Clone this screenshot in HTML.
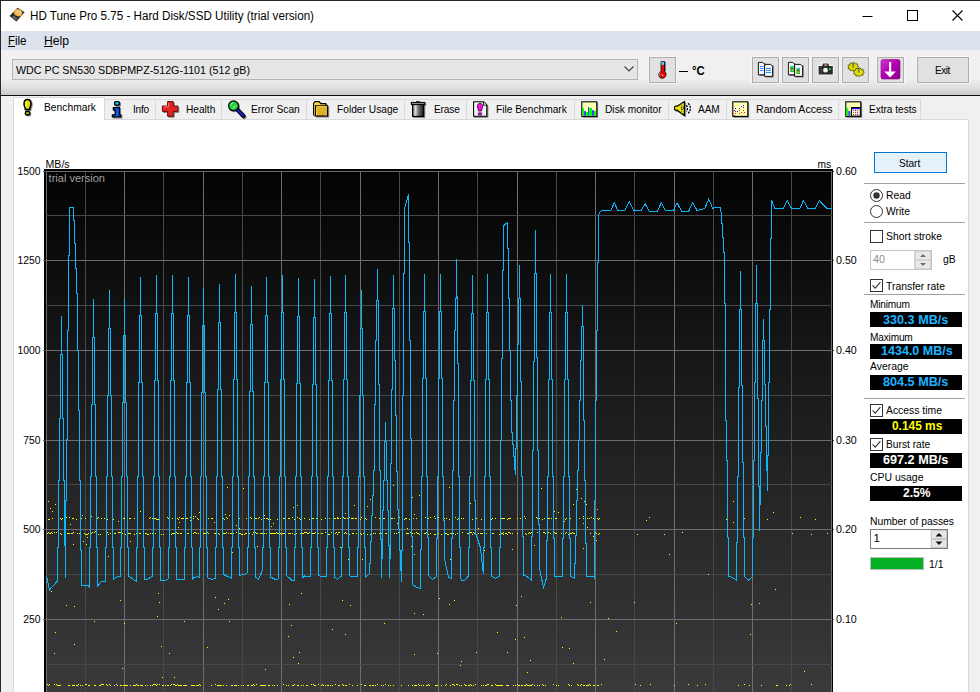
<!DOCTYPE html>
<html lang="en"><head><meta charset="utf-8"><title>HD Tune Pro 5.75 - Hard Disk/SSD Utility (trial version)</title>
<style>
html,body{margin:0;padding:0;}
body{width:980px;height:692px;overflow:hidden;background:#f0f0f0;font-family:"Liberation Sans",sans-serif;color:#000;position:relative;}
.t{position:absolute;white-space:pre;display:block;margin:0;padding:0;}
.abs{position:absolute;}
svg{position:absolute;overflow:visible;}
.tab{position:absolute;top:99px;height:20px;background:#f0f0f0;border:1px solid #d9d9d9;border-bottom:none;box-sizing:border-box;}
.tab.active{top:97px;height:23px;background:#fff;}
.tbtn{position:absolute;top:57px;height:26px;box-sizing:border-box;border:1px solid #adadad;background:#e1e1e1;box-shadow:0 0 0 1px #f6f6f6;}
.sep{position:absolute;left:864px;width:101px;height:1px;background:#a0a0a0;}
.val{position:absolute;left:870px;width:92px;height:15px;background:#000;}
.chk{position:absolute;left:870px;width:13px;height:13px;box-sizing:border-box;border:1px solid #333;background:#fff;}
</style></head><body>
<div style="position:absolute;left:0px;top:0px;width:980px;height:31px;background:#fff;"></div><div style="position:absolute;left:0px;top:0px;width:980px;height:1px;background:#2a2a2a;"></div><div style="position:absolute;left:0px;top:0px;width:1px;height:692px;background:#2a2a2a;z-index:50;"></div><svg style="left:8px;top:6px" width="20" height="18" viewBox="8 6 20 18"><path d="M17.5 8L24.3 12.3L16.4 21.2L9.8 15.9Z" fill="#262626" stroke="#3a3a3a" stroke-width="0.6"/><path d="M13.2 15.6L17.6 18.2L16 20L12 17.2Z" fill="#777" opacity="0.8"/><ellipse cx="18.1" cy="12.7" rx="4.3" ry="3.5" transform="rotate(20 18.1 12.7)" fill="#f0b040"/><ellipse cx="18.3" cy="12.3" rx="2.6" ry="2" transform="rotate(20 18.1 12.7)" fill="#f7cf78"/><circle cx="18.1" cy="12.6" r="1.1" fill="#b9b9c4"/></svg><span class="t" id="title" style="left:30px;top:8.42px;font-size:12.5px;line-height:16.5px;letter-spacing:0.000px;transform:scaleX(0.9313);transform-origin:0 0;">HD Tune Pro 5.75 - Hard Disk/SSD Utility (trial version)</span><svg style="left:850px;top:1px" width="130" height="30" viewBox="0 0 130 30"><path d="M12.5 15.5H22.5" stroke="#000" stroke-width="1" fill="none"/><rect x="57.5" y="9.5" width="10" height="10" fill="none" stroke="#000" stroke-width="1"/><path d="M102.5 9.5L112.5 19.5M112.5 9.5L102.5 19.5" stroke="#000" stroke-width="1.1" fill="none"/></svg><div style="position:absolute;left:1px;top:31px;width:979px;height:19px;background:#dce3ed;"></div><span class="t" id="m1" style="left:8px;top:33.04px;font-size:12px;line-height:16px;letter-spacing:0.000px;transform:scaleX(0.9556);transform-origin:0 0;"><u>F</u>ile</span><span class="t" id="m2" style="left:44px;top:33.04px;font-size:12px;line-height:16px;letter-spacing:0.000px;transform:scaleX(1.0127);transform-origin:0 0;"><u>H</u>elp</span><div style="position:absolute;left:1px;top:50px;width:979px;height:45px;background:linear-gradient(#f1f1f1 0,#f0f0f0 28px,#e2e2e2 37px,#c8c8c8 45px);"></div><div style="position:absolute;left:1px;top:95px;width:979px;height:1px;background:#101010;"></div><div style="position:absolute;left:12px;top:59px;width:626px;height:21px;box-sizing:border-box;border:1px solid #b4b4b4;background:#e6e6e6;"></div><span class="t" id="combo" style="left:16px;top:62.67px;font-size:11.5px;line-height:15.5px;letter-spacing:0.000px;transform:scaleX(0.9300);transform-origin:0 0;">WDC PC SN530 SDBPMPZ-512G-1101 (512 gB)</span><svg style="left:623px;top:65px" width="12" height="8" viewBox="0 0 12 8"><path d="M1.5 1.5L6 6L10.5 1.5" fill="none" stroke="#404040" stroke-width="1.1"/></svg><div class="tbtn" style="left:649px;width:27px"></div><div style="position:absolute;left:679px;top:71px;width:9px;height:1px;background:#000;"></div><span class="t" id="degc" style="left:691.5px;top:63.02px;font-size:12.5px;line-height:16.5px;letter-spacing:0.000px;transform:scaleX(0.9051);transform-origin:0 0;font-weight:bold;">°C</span><div class="tbtn" style="left:752px;width:27px"></div><div class="tbtn" style="left:782px;width:27px"></div><div class="tbtn" style="left:812px;width:27px"></div><div class="tbtn" style="left:842px;width:27px"></div><div class="tbtn" style="left:877px;width:27px"></div><div class="tbtn" style="left:917px;width:52px"></div><span class="t" id="exit" style="left:934.6px;top:62.57px;font-size:11.5px;line-height:15.5px;letter-spacing:-0.595px;transform:scaleX(0.8800);transform-origin:0 0;">Exit</span><svg style="left:640px;top:52px" width="340" height="36" viewBox="640 52 340 36"><path d="M661 61.6H664.6V71.6C666.6 72.4 666.8 76.8 663.8 78C660.4 79 657.8 76.4 659 73.4C659.4 72.4 660.2 72 661 71.6Z" fill="#f00000" stroke="#1a1a1a" stroke-width="0.9"/><rect x="661.3" y="61.9" width="2.9" height="3" fill="#30d8f0"/><path d="M660 72.6C659 73.6 659 75 659.6 76" stroke="#60e0f0" stroke-width="1" fill="none"/><path d="M661.8 74.2C661.8 75.2 662.6 75.8 663.4 75.8" stroke="#fff" stroke-width="0.9" fill="none"/><path d="M664.9 62V71.4" stroke="#000" stroke-width="1"/><path d="M759.4 63.4h6.4v12.4h-6.4z" fill="#000" opacity="0.55"/><path d="M758.4 62.4h4.4l2 2v10.4h-6.4z" fill="#f4f4f4" stroke="#000" stroke-width="0.9"/><rect x="760" y="66" width="3.4" height="1" fill="#1e90ff"/><rect x="760" y="68" width="3.4" height="1" fill="#1e90ff"/><rect x="760" y="70" width="3.4" height="1" fill="#1e90ff"/><path d="M765.6 65.4h8v12h-8z" fill="#000" opacity="0.55"/><path d="M764.6 64.4h6l2 2v10h-8z" fill="#f4f4f4" stroke="#000" stroke-width="0.9"/><rect x="766" y="68" width="5" height="1" fill="#1e90ff"/><rect x="766" y="70" width="5" height="1" fill="#1e90ff"/><rect x="766" y="72" width="5" height="1" fill="#1e90ff"/><path d="M789.4 63.4h6.4v12.4h-6.4z" fill="#000" opacity="0.55"/><path d="M788.4 62.4h4.4l2 2v10.4h-6.4z" fill="#f4f4f4" stroke="#000" stroke-width="0.9"/><rect x="790.2" y="66.6" width="3.6" height="5.4" fill="#20c030"/><rect x="790.2" y="65.8" width="3.6" height="1" fill="#30c8f0"/><rect x="791.4000000000001" y="67.8" width="1.4" height="1.6" fill="#e02020"/><rect x="791.6" y="69.6" width="1.4" height="1.4" fill="#e0c020"/><path d="M795.6 65.4h8v12h-8z" fill="#000" opacity="0.55"/><path d="M794.6 64.4h6l2 2v10h-8z" fill="#f4f4f4" stroke="#000" stroke-width="0.9"/><rect x="796.4" y="68.6" width="3.6" height="5.4" fill="#20c030"/><rect x="796.4" y="67.8" width="3.6" height="1" fill="#30c8f0"/><rect x="797.6" y="69.8" width="1.4" height="1.6" fill="#e02020"/><rect x="797.8" y="71.6" width="1.4" height="1.4" fill="#e0c020"/><path d="M818.6 66H822L823.2 63.4H828.2L829.4 66H832.8V74.4H818.6Z" fill="#2b2b2b" stroke="#fff" stroke-width="1.6" stroke-linejoin="round"/><path d="M818.6 66H822L823.2 63.4H828.2L829.4 66H832.8V74.4H818.6Z" fill="#2b2b2b"/><path d="M823.8 65.4C824.4 64.2 827 64.2 827.6 65.4Z" fill="#eee"/><rect x="820.6" y="66" width="0.8" height="8.4" fill="#555"/><circle cx="825.5" cy="70.2" r="2.4" fill="#f2f2f2"/><rect x="829.2" y="68.2" width="1.8" height="1.8" fill="#10e030"/><path d="M858.8 66.8L857.3 68.0L857.5 69.7L855.4 69.8L854.2 71.2L852.4 70.2L850.4 70.7L849.9 69.0L847.9 68.3L848.8 66.8L847.9 65.3L849.9 64.6L850.4 62.9L852.4 63.4L854.2 62.4L855.4 63.8L857.5 63.9L857.3 65.6Z" fill="#dede00" stroke="#5a5a00" stroke-width="0.9"/><rect x="852.5" y="63.199999999999996" width="1.4" height="4" fill="#9a9a9a" stroke="#555" stroke-width="0.4"/><path d="M864.4 72.2L862.9 73.4L863.1 75.1L861.0 75.2L859.8 76.6L858.0 75.6L856.0 76.1L855.5 74.4L853.5 73.7L854.4 72.2L853.5 70.7L855.5 70.0L856.0 68.3L858.0 68.8L859.8 67.8L861.0 69.2L863.1 69.3L862.9 71.0Z" fill="#dede00" stroke="#5a5a00" stroke-width="0.9"/><rect x="858.0999999999999" y="68.60000000000001" width="1.4" height="4" fill="#9a9a9a" stroke="#555" stroke-width="0.4"/><defs><linearGradient id="pu" x1="0" y1="0" x2="1" y2="1"><stop offset="0" stop-color="#d23cd2"/><stop offset="0.45" stop-color="#b400b4"/><stop offset="1" stop-color="#8c008c"/></linearGradient></defs><rect x="881" y="59.6" width="19" height="19.4" rx="1.8" fill="url(#pu)" stroke="#7a007a" stroke-width="0.6"/><path d="M889 62H891.2V71.4H895.8L890.1 77.4L884.2 71.4H889Z" fill="#fff"/></svg><div style="position:absolute;left:13px;top:119px;width:956px;height:580px;box-sizing:border-box;border:1px solid #d9d9d9;background:#fff;"></div><div class="tab active" style="left:13px;width:92px"></div><span class="t" id="tab0" style="left:43.5px;top:100.47px;font-size:11.5px;line-height:15.5px;letter-spacing:0.000px;transform:scaleX(0.8939);transform-origin:0 0;">Benchmark</span><div class="tab" style="left:104px;width:52px"></div><span class="t" id="tab1" style="left:132.5px;top:102.47px;font-size:11.5px;line-height:15.5px;letter-spacing:-0.259px;transform:scaleX(0.8800);transform-origin:0 0;">Info</span><div class="tab" style="left:155px;width:67px"></div><span class="t" id="tab2" style="left:185.5px;top:102.47px;font-size:11.5px;line-height:15.5px;letter-spacing:0.000px;transform:scaleX(0.8812);transform-origin:0 0;">Health</span><div class="tab" style="left:221px;width:86px"></div><span class="t" id="tab3" style="left:251.0px;top:102.47px;font-size:11.5px;line-height:15.5px;letter-spacing:0.000px;transform:scaleX(0.8878);transform-origin:0 0;">Error Scan</span><div class="tab" style="left:306px;width:99px"></div><span class="t" id="tab4" style="left:336.5px;top:102.47px;font-size:11.5px;line-height:15.5px;letter-spacing:0.000px;transform:scaleX(0.8878);transform-origin:0 0;">Folder Usage</span><div class="tab" style="left:404px;width:63px"></div><span class="t" id="tab5" style="left:434.0px;top:102.47px;font-size:11.5px;line-height:15.5px;letter-spacing:-0.182px;transform:scaleX(0.8800);transform-origin:0 0;">Erase</span><div class="tab" style="left:466px;width:109px"></div><span class="t" id="tab6" style="left:496.0px;top:102.47px;font-size:11.5px;line-height:15.5px;letter-spacing:0.000px;transform:scaleX(0.8862);transform-origin:0 0;">File Benchmark</span><div class="tab" style="left:574px;width:95px"></div><span class="t" id="tab7" style="left:604.5px;top:102.47px;font-size:11.5px;line-height:15.5px;letter-spacing:0.000px;transform:scaleX(0.8872);transform-origin:0 0;">Disk monitor</span><div class="tab" style="left:668px;width:59px"></div><span class="t" id="tab8" style="left:697.5px;top:102.47px;font-size:11.5px;line-height:15.5px;letter-spacing:-0.131px;transform:scaleX(0.8800);transform-origin:0 0;">AAM</span><div class="tab" style="left:726px;width:113px"></div><span class="t" id="tab9" style="left:755.5px;top:102.47px;font-size:11.5px;line-height:15.5px;letter-spacing:0.000px;transform:scaleX(0.9205);transform-origin:0 0;">Random Access</span><div class="tab" style="left:838px;width:83px"></div><span class="t" id="tab10" style="left:868.5px;top:102.47px;font-size:11.5px;line-height:15.5px;letter-spacing:-0.035px;transform:scaleX(0.8800);transform-origin:0 0;">Extra tests</span><svg style="left:0px;top:96px" width="980" height="26" viewBox="0 96 980 26"><g transform="translate(1 1)" opacity="0.45"><path d="M27.5 99.6C30.6 99.6 31 102 31 104C31 106.2 29.6 107.4 29.6 109.4L25.4 109.4C25.4 107.4 24 106.2 24 104C24 102 24.4 99.6 27.5 99.6Z" fill="#000" stroke="#000" stroke-width="1.5"/><rect x="25.4" y="111.5" width="4.2" height="3.2" rx="1.2" fill="#000" stroke="#000" stroke-width="1.5"/></g><path d="M27.5 99.6C30.6 99.6 31 102 31 104C31 106.2 29.6 107.4 29.6 109.4L25.4 109.4C25.4 107.4 24 106.2 24 104C24 102 24.4 99.6 27.5 99.6Z" fill="#dcdc00" stroke="#000" stroke-width="1.5"/><rect x="25.4" y="111.5" width="4.2" height="3.2" rx="1.2" fill="#dcdc00" stroke="#000" stroke-width="1.5"/><path d="M26.3 101.3v6.2" stroke="#f4f470" stroke-width="1.2"/><g transform="translate(1 1)" opacity="0.45"><rect x="114.6" y="101.6" width="4.8" height="3.6" rx="1" fill="#000" stroke="#000" stroke-width="1.3"/><path d="M113.4 107.6H119.4V114.8H120.8V116.8H112.4V114.8H115.2V109.8H113.4Z" fill="#000" stroke="#000" stroke-width="1.3"/></g><rect x="114.6" y="101.6" width="4.8" height="3.6" rx="1" fill="#00c8ff" stroke="#000" stroke-width="1.3"/><path d="M113.4 107.6H119.4V114.8H120.8V116.8H112.4V114.8H115.2V109.8H113.4Z" fill="#0a5cff" stroke="#000" stroke-width="1.3"/><g transform="translate(1 1)" opacity="0.45"><path d="M167.6 101.6H173.2V106H177.8V111.4H173.2V116.2H167.6V111.4H162.4V106H167.6Z" fill="#000" stroke="#000" stroke-width="1"/></g><path d="M167.6 101.6H173.2V106H177.8V111.4H173.2V116.2H167.6V111.4H162.4V106H167.6Z" fill="#e32424" stroke="#6a0a0a" stroke-width="1"/><path d="M168.6 103v3.8h-4.8" stroke="#f77" stroke-width="1" fill="none"/><g transform="translate(1 1)" opacity="0.45"><path d="M237.4 109.6L243.4 116" stroke="#000" stroke-width="4.2" stroke-linecap="round"/><path d="M237.6 109.8L243.2 115.8" stroke="#000" stroke-width="2.2" stroke-linecap="round"/><circle cx="233.5" cy="105.8" r="4.9" fill="#000" stroke="#000" stroke-width="1.2"/></g><path d="M237.4 109.6L243.4 116" stroke="#000" stroke-width="4.2" stroke-linecap="round"/><path d="M237.6 109.8L243.2 115.8" stroke="#1a1ad0" stroke-width="2.2" stroke-linecap="round"/><circle cx="233.5" cy="105.8" r="4.9" fill="#22d040" stroke="#000" stroke-width="1.2"/><path d="M230.5 105L233 102.6M233 108.2L236 105.2" stroke="#c8ffd0" stroke-width="0.9"/><g transform="translate(1 1)" opacity="0.45"><path d="M313.6 115.4V103.2L315 101.6H319.2L320.8 103.6H325.8V106" fill="#000" stroke="#000" stroke-width="1.1"/><rect x="315.6" y="105.8" width="12" height="10.2" fill="#000" stroke="#000" stroke-width="1.1"/></g><path d="M313.6 115.4V103.2L315 101.6H319.2L320.8 103.6H325.8V106" fill="#f2d848" stroke="#000" stroke-width="1.1"/><rect x="315.6" y="105.8" width="12" height="10.2" fill="#dfb11c" stroke="#000" stroke-width="1.1"/><path d="M316.4 106.6h10.4M316.6 106.8v8.6" stroke="#f7e070" stroke-width="0.9" fill="none"/><path d="M325.3 106.4v9.2" stroke="#b9b9b9" stroke-width="0.7"/><defs><linearGradient id="trg" x1="0" x2="1"><stop offset="0" stop-color="#5a5a5a"/><stop offset="0.25" stop-color="#e0e0e0"/><stop offset="0.55" stop-color="#6a6a6a"/><stop offset="1" stop-color="#1c1c1c"/></linearGradient></defs><g transform="translate(1 1)" opacity="0.45"><rect x="412.6" y="104.4" width="11" height="12" fill="#000" stroke="#000" stroke-width="1.2"/><rect x="411.3" y="102.4" width="13.4" height="2.2" fill="#000" stroke="#000" stroke-width="1"/><rect x="416" y="101.2" width="3.8" height="1.4" fill="#111"/></g><rect x="412.6" y="104.4" width="11" height="12" fill="url(#trg)" stroke="#000" stroke-width="1.2"/><rect x="411.3" y="102.4" width="13.4" height="2.2" fill="#8a8a8a" stroke="#000" stroke-width="1"/><rect x="416" y="101.2" width="3.8" height="1.4" fill="#111"/><defs><linearGradient id="pgg" x1="0" x2="1"><stop offset="0" stop-color="#fff"/><stop offset="0.5" stop-color="#dcdcdc"/><stop offset="1" stop-color="#fff"/></linearGradient></defs><g transform="translate(1 1)" opacity="0.45"><path d="M473.6 101.8H483.6L486.8 105V116.2H473.6Z" fill="#000" stroke="#000" stroke-width="1.1"/></g><path d="M473.6 101.8H483.6L486.8 105V116.2H473.6Z" fill="url(#pgg)" stroke="#000" stroke-width="1.1"/><path d="M483.4 101.8V105.2H486.8" fill="#fff" stroke="#000" stroke-width="0.9"/><path d="M480 103.4C482.2 103.4 482.6 105.4 482.6 106.6C482.6 108.4 481.4 109.4 481.4 111H478.6C478.6 109.4 477.4 108.4 477.4 106.6C477.4 105.4 477.8 103.4 480 103.4Z" fill="#f010e0" stroke="#300030" stroke-width="0.8"/><rect x="478.4" y="112.8" width="3.2" height="2.2" rx="0.8" fill="#f010e0" stroke="#300030" stroke-width="0.8"/><rect x="582.5" y="102.5" width="15.6" height="15.3" fill="#000" opacity="0.45"/><rect x="581.8" y="101.8" width="15" height="14.6" fill="#ffffb4" stroke="#000" stroke-width="1.1"/><rect x="582.3" y="107.8" width="1.7" height="8.0" fill="#00ff00"/><rect x="584" y="111.1" width="2.0" height="4.7" fill="#4040ff"/><rect x="586" y="112" width="2.0" height="3.8" fill="#00ff00"/><rect x="588" y="107" width="1.1" height="8.8" fill="#4040ff"/><rect x="589.1" y="107.8" width="2.9" height="8.0" fill="#00ff00"/><rect x="592" y="110.1" width="2.0" height="5.7" fill="#4040ff"/><rect x="594" y="110.9" width="2.2" height="4.9" fill="#00ff00"/><g transform="translate(1 1)" opacity="0.45"><path d="M677.2 106.2L684.4 101.4V115.4L677.2 110.2H675.4C674.2 110.2 674.2 106.2 675.4 106.2Z" fill="#000" stroke="#000" stroke-width="1.2" stroke-linejoin="round"/></g><path d="M677.2 106.2L684.4 101.4V115.4L677.2 110.2H675.4C674.2 110.2 674.2 106.2 675.4 106.2Z" fill="#e6e600" stroke="#000" stroke-width="1.2" stroke-linejoin="round"/><path d="M681.6 102.8V114" stroke="#555" stroke-width="0.7" stroke-dasharray="1.2 0.8"/><rect x="681.6" y="107" width="1.6" height="2.4" fill="#ddd" stroke="#000" stroke-width="0.5"/><path d="M686.2 105.2C687.9 106.8 687.9 109.8 686.2 111.4M688 103.2C691.2 106.2 691.2 110.6 688 113.4" fill="none" stroke="#000" stroke-width="1.25" stroke-dasharray="2.2 0.9"/><rect x="733.5" y="102.5" width="15.6" height="15.3" fill="#000" opacity="0.45"/><rect x="732.8" y="101.8" width="15" height="14.6" fill="#ffffb4" stroke="#000" stroke-width="1.1"/><rect x="734" y="110" width="1" height="1" fill="#1010ff"/><rect x="735" y="108" width="1" height="1" fill="#1010ff"/><rect x="737" y="111" width="1" height="1" fill="#1010ff"/><rect x="739" y="108" width="1" height="1" fill="#1010ff"/><rect x="741" y="106" width="1" height="1" fill="#1010ff"/><rect x="743" y="105" width="1" height="1" fill="#1010ff"/><rect x="743" y="107" width="1" height="1" fill="#1010ff"/><rect x="734" y="115" width="1" height="1" fill="#ff1010"/><rect x="735" y="111" width="1" height="1" fill="#ff1010"/><rect x="735" y="113" width="1" height="1" fill="#ff1010"/><rect x="739" y="110" width="1" height="1" fill="#ff1010"/><rect x="739" y="113" width="1" height="1" fill="#ff1010"/><rect x="741" y="112" width="1" height="1" fill="#ff1010"/><rect x="743" y="110" width="1" height="1" fill="#ff1010"/><rect x="744" y="112" width="1" height="1" fill="#ff1010"/><rect x="846.5" y="102.5" width="15.6" height="15.3" fill="#000" opacity="0.45"/><rect x="845.8" y="101.8" width="15" height="14.6" fill="#ffffb4" stroke="#000" stroke-width="1.1"/><rect x="846.3" y="107.8" width="2" height="8" fill="#00ff00"/><rect x="848.3" y="111" width="2" height="4.8" fill="#4040ff"/><rect x="850.3" y="112" width="1.2" height="3.8" fill="#00ff00"/><rect x="851.5" y="107.5" width="8.8" height="8.6" fill="#f4f4f4" stroke="#000" stroke-width="1"/><rect x="852" y="108" width="7.8" height="1.2" fill="#1010e0"/><rect x="853" y="110" width="1" height="1" fill="#ff1010"/><rect x="855" y="110" width="1" height="1" fill="#1010ff"/><rect x="857" y="110" width="1" height="1" fill="#ff1010"/><rect x="853" y="112" width="1" height="1" fill="#10b010"/><rect x="855" y="112" width="1" height="1" fill="#ff1010"/><rect x="857" y="112" width="1" height="1" fill="#ff1010"/><rect x="853" y="114" width="1" height="1" fill="#ff1010"/><rect x="855" y="114" width="1" height="1" fill="#ff1010"/><rect x="857" y="114" width="1" height="1" fill="#1010ff"/></svg><svg style="left:0;top:0" width="980" height="692" viewBox="0 0 980 692"><defs><linearGradient id="bg" x1="0" y1="0" x2="0" y2="1"><stop offset="0" stop-color="#030303"/><stop offset="1" stop-color="#3c3c3c"/></linearGradient></defs><rect x="44" y="169" width="789" height="523" fill="#000"/><rect x="46" y="171" width="786" height="539" fill="url(#bg)"/><rect x="46" y="171" width="1" height="521" fill="#6e6e6e"/><rect x="85" y="171" width="1" height="521" fill="#484848"/><rect x="124" y="171" width="1" height="521" fill="#6e6e6e"/><rect x="163" y="171" width="1" height="521" fill="#484848"/><rect x="203" y="171" width="1" height="521" fill="#6e6e6e"/><rect x="242" y="171" width="1" height="521" fill="#484848"/><rect x="281" y="171" width="1" height="521" fill="#6e6e6e"/><rect x="320" y="171" width="1" height="521" fill="#484848"/><rect x="360" y="171" width="1" height="521" fill="#6e6e6e"/><rect x="399" y="171" width="1" height="521" fill="#484848"/><rect x="438" y="171" width="1" height="521" fill="#6e6e6e"/><rect x="477" y="171" width="1" height="521" fill="#484848"/><rect x="517" y="171" width="1" height="521" fill="#6e6e6e"/><rect x="556" y="171" width="1" height="521" fill="#484848"/><rect x="595" y="171" width="1" height="521" fill="#6e6e6e"/><rect x="634" y="171" width="1" height="521" fill="#484848"/><rect x="674" y="171" width="1" height="521" fill="#6e6e6e"/><rect x="713" y="171" width="1" height="521" fill="#484848"/><rect x="752" y="171" width="1" height="521" fill="#6e6e6e"/><rect x="791" y="171" width="1" height="521" fill="#484848"/><rect x="831" y="171" width="1" height="521" fill="#6e6e6e"/><rect x="46" y="171" width="786" height="1" fill="#6e6e6e"/><rect x="43" y="171" width="3" height="1" fill="#555"/><rect x="832" y="171" width="2" height="1" fill="#555"/><rect x="46" y="215" width="786" height="1" fill="#484848"/><rect x="46" y="260" width="786" height="1" fill="#6e6e6e"/><rect x="43" y="260" width="3" height="1" fill="#555"/><rect x="832" y="260" width="2" height="1" fill="#555"/><rect x="46" y="305" width="786" height="1" fill="#484848"/><rect x="46" y="350" width="786" height="1" fill="#6e6e6e"/><rect x="43" y="350" width="3" height="1" fill="#555"/><rect x="832" y="350" width="2" height="1" fill="#555"/><rect x="46" y="395" width="786" height="1" fill="#484848"/><rect x="46" y="440" width="786" height="1" fill="#6e6e6e"/><rect x="43" y="440" width="3" height="1" fill="#555"/><rect x="832" y="440" width="2" height="1" fill="#555"/><rect x="46" y="484" width="786" height="1" fill="#484848"/><rect x="46" y="529" width="786" height="1" fill="#6e6e6e"/><rect x="43" y="529" width="3" height="1" fill="#555"/><rect x="832" y="529" width="2" height="1" fill="#555"/><rect x="46" y="574" width="786" height="1" fill="#484848"/><rect x="46" y="619" width="786" height="1" fill="#6e6e6e"/><rect x="43" y="619" width="3" height="1" fill="#555"/><rect x="832" y="619" width="2" height="1" fill="#555"/><rect x="46" y="664" width="786" height="1" fill="#484848"/><rect x="832" y="169" width="1" height="523" fill="#000"/><path d="M47 533h1v1h-1zM47 684h1v1h-1zM48 501h1v1h-1zM48 519h1v1h-1zM48 532h1v1h-1zM48 685h1v1h-1zM49 519h1v1h-1zM49 533h1v1h-1zM49 684h1v1h-1zM50 508h1v1h-1zM50 533h1v1h-1zM51 532h1v1h-1zM51 591h1v1h-1zM52 511h1v1h-1zM52 518h1v1h-1zM52 533h1v1h-1zM54 532h1v1h-1zM54 653h1v1h-1zM54 684h1v1h-1zM55 504h1v1h-1zM55 632h1v1h-1zM56 532h1v1h-1zM56 684h1v1h-1zM57 685h1v1h-1zM58 519h1v1h-1zM58 685h1v1h-1zM59 685h1v1h-1zM60 518h1v1h-1zM60 533h1v1h-1zM60 685h1v1h-1zM61 519h1v1h-1zM61 534h1v1h-1zM62 518h1v1h-1zM65 519h1v1h-1zM65 534h1v1h-1zM65 538h1v1h-1zM66 517h1v1h-1zM66 605h1v1h-1zM67 533h1v1h-1zM68 533h1v1h-1zM68 685h1v1h-1zM69 517h1v1h-1zM69 533h1v1h-1zM69 685h1v1h-1zM70 524h1v1h-1zM71 533h1v1h-1zM72 518h1v1h-1zM72 533h1v1h-1zM72 685h1v1h-1zM73 518h1v1h-1zM73 532h1v1h-1zM73 544h1v1h-1zM73 685h1v1h-1zM74 606h1v1h-1zM74 644h1v1h-1zM74 685h1v1h-1zM76 519h1v1h-1zM76 685h1v1h-1zM77 533h1v1h-1zM77 685h1v1h-1zM78 684h1v1h-1zM79 533h1v1h-1zM80 685h1v1h-1zM81 518h1v1h-1zM82 515h1v1h-1zM82 685h1v1h-1zM83 541h1v1h-1zM84 533h1v1h-1zM85 518h1v1h-1zM85 534h1v1h-1zM85 684h1v1h-1zM86 534h1v1h-1zM86 544h1v1h-1zM86 684h1v1h-1zM87 534h1v1h-1zM87 537h1v1h-1zM88 533h1v1h-1zM88 685h1v1h-1zM89 685h1v1h-1zM91 516h1v1h-1zM91 533h1v1h-1zM92 532h1v1h-1zM94 532h1v1h-1zM94 621h1v1h-1zM94 685h1v1h-1zM95 531h1v1h-1zM95 685h1v1h-1zM96 508h1v1h-1zM96 519h1v1h-1zM96 533h1v1h-1zM97 518h1v1h-1zM98 517h1v1h-1zM98 534h1v1h-1zM99 685h1v1h-1zM100 534h1v1h-1zM100 685h1v1h-1zM101 518h1v1h-1zM101 684h1v1h-1zM102 684h1v1h-1zM103 684h1v1h-1zM104 518h1v1h-1zM106 518h1v1h-1zM106 684h1v1h-1zM107 519h1v1h-1zM107 532h1v1h-1zM107 685h1v1h-1zM108 534h1v1h-1zM108 556h1v1h-1zM109 684h1v1h-1zM110 533h1v1h-1zM110 685h1v1h-1zM112 533h1v1h-1zM113 519h1v1h-1zM114 533h1v1h-1zM114 685h1v1h-1zM115 533h1v1h-1zM116 684h1v1h-1zM117 685h1v1h-1zM118 521h1v1h-1zM118 532h1v1h-1zM119 532h1v1h-1zM120 532h1v1h-1zM120 600h1v1h-1zM120 685h1v1h-1zM121 524h1v1h-1zM121 529h1v1h-1zM121 533h1v1h-1zM121 685h1v1h-1zM122 533h1v1h-1zM122 668h1v1h-1zM123 518h1v1h-1zM123 685h1v1h-1zM124 518h1v1h-1zM124 623h1v1h-1zM124 685h1v1h-1zM125 534h1v1h-1zM125 685h1v1h-1zM126 685h1v1h-1zM127 534h1v1h-1zM127 685h1v1h-1zM128 533h1v1h-1zM129 518h1v1h-1zM129 533h1v1h-1zM130 518h1v1h-1zM130 533h1v1h-1zM130 541h1v1h-1zM130 685h1v1h-1zM133 685h1v1h-1zM134 518h1v1h-1zM134 534h1v1h-1zM134 685h1v1h-1zM135 685h1v1h-1zM136 533h1v1h-1zM136 684h1v1h-1zM137 533h1v1h-1zM137 685h1v1h-1zM138 685h1v1h-1zM139 533h1v1h-1zM140 511h1v1h-1zM140 533h1v1h-1zM140 685h1v1h-1zM141 685h1v1h-1zM142 685h1v1h-1zM143 517h1v1h-1zM143 518h1v1h-1zM143 533h1v1h-1zM145 533h1v1h-1zM145 685h1v1h-1zM146 533h1v1h-1zM147 534h1v1h-1zM147 685h1v1h-1zM148 534h1v1h-1zM149 518h1v1h-1zM150 517h1v1h-1zM150 533h1v1h-1zM150 685h1v1h-1zM152 518h1v1h-1zM152 533h1v1h-1zM152 685h1v1h-1zM153 533h1v1h-1zM153 684h1v1h-1zM154 518h1v1h-1zM154 684h1v1h-1zM155 518h1v1h-1zM155 533h1v1h-1zM155 684h1v1h-1zM156 519h1v1h-1zM156 685h1v1h-1zM157 519h1v1h-1zM157 616h1v1h-1zM157 684h1v1h-1zM158 519h1v1h-1zM158 593h1v1h-1zM159 527h1v1h-1zM159 602h1v1h-1zM159 684h1v1h-1zM161 534h1v1h-1zM161 646h1v1h-1zM162 677h1v1h-1zM162 685h1v1h-1zM163 534h1v1h-1zM163 685h1v1h-1zM165 685h1v1h-1zM167 517h1v1h-1zM167 685h1v1h-1zM168 518h1v1h-1zM168 685h1v1h-1zM169 518h1v1h-1zM169 533h1v1h-1zM169 653h1v1h-1zM170 685h1v1h-1zM171 534h1v1h-1zM171 684h1v1h-1zM172 518h1v1h-1zM172 533h1v1h-1zM173 533h1v1h-1zM173 684h1v1h-1zM174 533h1v1h-1zM174 677h1v1h-1zM174 684h1v1h-1zM175 533h1v1h-1zM175 685h1v1h-1zM176 532h1v1h-1zM176 685h1v1h-1zM177 518h1v1h-1zM177 533h1v1h-1zM177 684h1v1h-1zM178 519h1v1h-1zM178 527h1v1h-1zM178 533h1v1h-1zM178 685h1v1h-1zM179 517h1v1h-1zM179 522h1v1h-1zM179 685h1v1h-1zM180 533h1v1h-1zM180 685h1v1h-1zM181 518h1v1h-1zM181 533h1v1h-1zM181 685h1v1h-1zM182 518h1v1h-1zM183 518h1v1h-1zM183 685h1v1h-1zM184 621h1v1h-1zM184 685h1v1h-1zM185 685h1v1h-1zM186 518h1v1h-1zM186 685h1v1h-1zM187 518h1v1h-1zM187 533h1v1h-1zM188 533h1v1h-1zM190 517h1v1h-1zM190 520h1v1h-1zM191 685h1v1h-1zM192 685h1v1h-1zM193 516h1v1h-1zM193 518h1v1h-1zM193 533h1v1h-1zM193 685h1v1h-1zM194 532h1v1h-1zM194 685h1v1h-1zM195 516h1v1h-1zM195 532h1v1h-1zM196 533h1v1h-1zM196 685h1v1h-1zM197 518h1v1h-1zM197 685h1v1h-1zM198 519h1v1h-1zM198 533h1v1h-1zM198 685h1v1h-1zM199 512h1v1h-1zM199 684h1v1h-1zM200 533h1v1h-1zM200 685h1v1h-1zM203 533h1v1h-1zM204 533h1v1h-1zM205 533h1v1h-1zM207 532h1v1h-1zM207 647h1v1h-1zM208 518h1v1h-1zM208 533h1v1h-1zM211 518h1v1h-1zM211 685h1v1h-1zM212 518h1v1h-1zM214 522h1v1h-1zM214 533h1v1h-1zM215 533h1v1h-1zM215 597h1v1h-1zM215 684h1v1h-1zM216 518h1v1h-1zM216 519h1v1h-1zM216 533h1v1h-1zM217 685h1v1h-1zM218 533h1v1h-1zM218 609h1v1h-1zM218 685h1v1h-1zM219 534h1v1h-1zM219 685h1v1h-1zM220 685h1v1h-1zM221 685h1v1h-1zM222 533h1v1h-1zM223 518h1v1h-1zM223 533h1v1h-1zM223 685h1v1h-1zM224 519h1v1h-1zM224 533h1v1h-1zM224 603h1v1h-1zM225 514h1v1h-1zM225 533h1v1h-1zM226 517h1v1h-1zM226 532h1v1h-1zM226 685h1v1h-1zM227 487h1v1h-1zM227 518h1v1h-1zM228 533h1v1h-1zM228 599h1v1h-1zM229 515h1v1h-1zM229 621h1v1h-1zM230 533h1v1h-1zM231 533h1v1h-1zM231 685h1v1h-1zM232 552h1v1h-1zM232 685h1v1h-1zM233 533h1v1h-1zM234 685h1v1h-1zM235 685h1v1h-1zM236 525h1v1h-1zM236 532h1v1h-1zM236 685h1v1h-1zM238 534h1v1h-1zM238 685h1v1h-1zM239 518h1v1h-1zM239 528h1v1h-1zM239 533h1v1h-1zM240 533h1v1h-1zM241 534h1v1h-1zM241 685h1v1h-1zM242 534h1v1h-1zM243 488h1v1h-1zM243 685h1v1h-1zM244 534h1v1h-1zM245 533h1v1h-1zM246 518h1v1h-1zM246 533h1v1h-1zM247 685h1v1h-1zM248 499h1v1h-1zM248 518h1v1h-1zM248 532h1v1h-1zM248 685h1v1h-1zM249 533h1v1h-1zM250 517h1v1h-1zM251 518h1v1h-1zM251 685h1v1h-1zM252 534h1v1h-1zM252 685h1v1h-1zM253 532h1v1h-1zM253 684h1v1h-1zM254 514h1v1h-1zM254 685h1v1h-1zM255 518h1v1h-1zM255 532h1v1h-1zM256 518h1v1h-1zM256 533h1v1h-1zM256 684h1v1h-1zM257 533h1v1h-1zM257 546h1v1h-1zM258 518h1v1h-1zM259 517h1v1h-1zM260 533h1v1h-1zM260 685h1v1h-1zM261 519h1v1h-1zM261 533h1v1h-1zM261 685h1v1h-1zM262 533h1v1h-1zM262 685h1v1h-1zM263 532h1v1h-1zM263 685h1v1h-1zM264 515h1v1h-1zM264 518h1v1h-1zM264 533h1v1h-1zM264 685h1v1h-1zM265 669h1v1h-1zM265 685h1v1h-1zM266 518h1v1h-1zM266 533h1v1h-1zM267 518h1v1h-1zM268 519h1v1h-1zM268 685h1v1h-1zM269 533h1v1h-1zM269 685h1v1h-1zM270 519h1v1h-1zM270 533h1v1h-1zM271 526h1v1h-1zM271 533h1v1h-1zM272 533h1v1h-1zM272 685h1v1h-1zM273 523h1v1h-1zM273 533h1v1h-1zM274 533h1v1h-1zM274 685h1v1h-1zM275 533h1v1h-1zM276 532h1v1h-1zM277 519h1v1h-1zM277 533h1v1h-1zM277 685h1v1h-1zM278 533h1v1h-1zM279 518h1v1h-1zM280 533h1v1h-1zM281 534h1v1h-1zM282 533h1v1h-1zM283 518h1v1h-1zM283 533h1v1h-1zM283 684h1v1h-1zM284 518h1v1h-1zM284 533h1v1h-1zM285 519h1v1h-1zM286 685h1v1h-1zM288 518h1v1h-1zM288 533h1v1h-1zM288 636h1v1h-1zM288 685h1v1h-1zM289 518h1v1h-1zM289 533h1v1h-1zM289 604h1v1h-1zM290 533h1v1h-1zM291 625h1v1h-1zM292 517h1v1h-1zM292 533h1v1h-1zM292 685h1v1h-1zM293 507h1v1h-1zM293 657h1v1h-1zM293 685h1v1h-1zM294 519h1v1h-1zM294 534h1v1h-1zM294 684h1v1h-1zM296 533h1v1h-1zM297 505h1v1h-1zM297 517h1v1h-1zM297 685h1v1h-1zM298 663h1v1h-1zM298 685h1v1h-1zM299 518h1v1h-1zM299 652h1v1h-1zM300 519h1v1h-1zM300 533h1v1h-1zM301 519h1v1h-1zM301 532h1v1h-1zM301 593h1v1h-1zM301 685h1v1h-1zM302 533h1v1h-1zM303 533h1v1h-1zM303 685h1v1h-1zM304 518h1v1h-1zM304 532h1v1h-1zM305 532h1v1h-1zM306 532h1v1h-1zM306 685h1v1h-1zM307 533h1v1h-1zM307 685h1v1h-1zM308 533h1v1h-1zM309 519h1v1h-1zM309 532h1v1h-1zM311 533h1v1h-1zM311 684h1v1h-1zM312 518h1v1h-1zM312 533h1v1h-1zM313 518h1v1h-1zM313 533h1v1h-1zM313 684h1v1h-1zM314 533h1v1h-1zM314 685h1v1h-1zM315 532h1v1h-1zM315 685h1v1h-1zM316 518h1v1h-1zM317 522h1v1h-1zM317 533h1v1h-1zM318 533h1v1h-1zM318 684h1v1h-1zM321 519h1v1h-1zM321 533h1v1h-1zM321 685h1v1h-1zM322 533h1v1h-1zM322 684h1v1h-1zM323 685h1v1h-1zM325 518h1v1h-1zM325 532h1v1h-1zM325 685h1v1h-1zM327 685h1v1h-1zM328 534h1v1h-1zM328 685h1v1h-1zM329 518h1v1h-1zM329 534h1v1h-1zM330 685h1v1h-1zM331 532h1v1h-1zM332 629h1v1h-1zM332 685h1v1h-1zM333 518h1v1h-1zM333 532h1v1h-1zM334 518h1v1h-1zM335 518h1v1h-1zM335 533h1v1h-1zM335 684h1v1h-1zM336 532h1v1h-1zM337 517h1v1h-1zM337 518h1v1h-1zM337 534h1v1h-1zM338 518h1v1h-1zM338 532h1v1h-1zM338 685h1v1h-1zM339 532h1v1h-1zM339 685h1v1h-1zM340 518h1v1h-1zM340 547h1v1h-1zM342 532h1v1h-1zM342 600h1v1h-1zM342 684h1v1h-1zM343 517h1v1h-1zM343 685h1v1h-1zM344 518h1v1h-1zM344 533h1v1h-1zM345 513h1v1h-1zM345 518h1v1h-1zM345 532h1v1h-1zM345 634h1v1h-1zM345 685h1v1h-1zM346 533h1v1h-1zM346 685h1v1h-1zM347 518h1v1h-1zM348 559h1v1h-1zM349 517h1v1h-1zM349 534h1v1h-1zM349 684h1v1h-1zM350 605h1v1h-1zM351 518h1v1h-1zM352 518h1v1h-1zM352 533h1v1h-1zM352 685h1v1h-1zM353 518h1v1h-1zM353 533h1v1h-1zM354 505h1v1h-1zM355 518h1v1h-1zM356 518h1v1h-1zM356 533h1v1h-1zM357 685h1v1h-1zM358 529h1v1h-1zM358 533h1v1h-1zM360 519h1v1h-1zM360 533h1v1h-1zM361 517h1v1h-1zM361 534h1v1h-1zM361 684h1v1h-1zM362 559h1v1h-1zM363 533h1v1h-1zM364 532h1v1h-1zM364 537h1v1h-1zM364 685h1v1h-1zM365 518h1v1h-1zM365 685h1v1h-1zM366 519h1v1h-1zM367 506h1v1h-1zM367 534h1v1h-1zM369 685h1v1h-1zM370 499h1v1h-1zM370 534h1v1h-1zM370 685h1v1h-1zM371 533h1v1h-1zM372 685h1v1h-1zM373 533h1v1h-1zM373 685h1v1h-1zM375 517h1v1h-1zM375 533h1v1h-1zM375 685h1v1h-1zM377 684h1v1h-1zM379 518h1v1h-1zM379 533h1v1h-1zM380 533h1v1h-1zM381 533h1v1h-1zM381 685h1v1h-1zM382 511h1v1h-1zM383 518h1v1h-1zM383 685h1v1h-1zM384 518h1v1h-1zM384 623h1v1h-1zM385 533h1v1h-1zM385 684h1v1h-1zM386 533h1v1h-1zM388 518h1v1h-1zM388 533h1v1h-1zM388 685h1v1h-1zM390 533h1v1h-1zM390 685h1v1h-1zM391 518h1v1h-1zM392 518h1v1h-1zM393 485h1v1h-1zM393 685h1v1h-1zM394 518h1v1h-1zM394 533h1v1h-1zM396 533h1v1h-1zM397 523h1v1h-1zM398 532h1v1h-1zM399 517h1v1h-1zM399 533h1v1h-1zM401 685h1v1h-1zM402 533h1v1h-1zM404 519h1v1h-1zM405 518h1v1h-1zM406 518h1v1h-1zM406 533h1v1h-1zM407 528h1v1h-1zM407 533h1v1h-1zM408 533h1v1h-1zM408 685h1v1h-1zM409 519h1v1h-1zM410 532h1v1h-1zM411 518h1v1h-1zM411 534h1v1h-1zM411 546h1v1h-1zM412 497h1v1h-1zM412 533h1v1h-1zM412 685h1v1h-1zM413 518h1v1h-1zM414 514h1v1h-1zM414 533h1v1h-1zM414 554h1v1h-1zM414 613h1v1h-1zM414 654h1v1h-1zM414 685h1v1h-1zM415 685h1v1h-1zM416 518h1v1h-1zM416 532h1v1h-1zM416 685h1v1h-1zM417 533h1v1h-1zM418 533h1v1h-1zM418 684h1v1h-1zM419 495h1v1h-1zM419 534h1v1h-1zM419 685h1v1h-1zM421 534h1v1h-1zM421 685h1v1h-1zM423 614h1v1h-1zM423 685h1v1h-1zM424 533h1v1h-1zM425 517h1v1h-1zM425 533h1v1h-1zM426 532h1v1h-1zM426 685h1v1h-1zM427 685h1v1h-1zM428 518h1v1h-1zM428 534h1v1h-1zM428 684h1v1h-1zM429 685h1v1h-1zM430 517h1v1h-1zM430 533h1v1h-1zM434 516h1v1h-1zM434 534h1v1h-1zM435 518h1v1h-1zM435 534h1v1h-1zM435 685h1v1h-1zM436 685h1v1h-1zM437 653h1v1h-1zM437 685h1v1h-1zM438 517h1v1h-1zM438 533h1v1h-1zM439 598h1v1h-1zM441 534h1v1h-1zM441 685h1v1h-1zM443 514h1v1h-1zM443 517h1v1h-1zM444 518h1v1h-1zM444 533h1v1h-1zM445 533h1v1h-1zM445 685h1v1h-1zM446 518h1v1h-1zM446 533h1v1h-1zM446 684h1v1h-1zM447 534h1v1h-1zM448 534h1v1h-1zM449 487h1v1h-1zM449 519h1v1h-1zM449 604h1v1h-1zM450 533h1v1h-1zM450 559h1v1h-1zM450 685h1v1h-1zM451 533h1v1h-1zM452 684h1v1h-1zM453 533h1v1h-1zM453 684h1v1h-1zM454 600h1v1h-1zM454 685h1v1h-1zM455 517h1v1h-1zM455 534h1v1h-1zM456 684h1v1h-1zM457 519h1v1h-1zM457 533h1v1h-1zM457 684h1v1h-1zM458 518h1v1h-1zM459 533h1v1h-1zM459 685h1v1h-1zM460 665h1v1h-1zM461 518h1v1h-1zM461 661h1v1h-1zM461 685h1v1h-1zM462 532h1v1h-1zM463 518h1v1h-1zM464 684h1v1h-1zM465 685h1v1h-1zM466 685h1v1h-1zM467 533h1v1h-1zM468 533h1v1h-1zM468 685h1v1h-1zM469 533h1v1h-1zM469 685h1v1h-1zM470 503h1v1h-1zM470 532h1v1h-1zM470 684h1v1h-1zM471 532h1v1h-1zM471 685h1v1h-1zM472 519h1v1h-1zM472 534h1v1h-1zM473 532h1v1h-1zM473 685h1v1h-1zM474 533h1v1h-1zM475 533h1v1h-1zM475 684h1v1h-1zM476 518h1v1h-1zM476 652h1v1h-1zM478 528h1v1h-1zM478 533h1v1h-1zM480 533h1v1h-1zM481 519h1v1h-1zM481 533h1v1h-1zM481 685h1v1h-1zM482 533h1v1h-1zM483 685h1v1h-1zM484 507h1v1h-1zM484 550h1v1h-1zM485 685h1v1h-1zM486 533h1v1h-1zM486 685h1v1h-1zM487 684h1v1h-1zM488 684h1v1h-1zM490 511h1v1h-1zM490 518h1v1h-1zM490 533h1v1h-1zM491 519h1v1h-1zM491 685h1v1h-1zM492 518h1v1h-1zM492 533h1v1h-1zM492 685h1v1h-1zM493 533h1v1h-1zM495 518h1v1h-1zM495 684h1v1h-1zM496 685h1v1h-1zM497 632h1v1h-1zM497 685h1v1h-1zM498 685h1v1h-1zM499 534h1v1h-1zM499 685h1v1h-1zM500 533h1v1h-1zM500 685h1v1h-1zM501 518h1v1h-1zM501 533h1v1h-1zM501 685h1v1h-1zM502 518h1v1h-1zM502 533h1v1h-1zM502 685h1v1h-1zM503 518h1v1h-1zM503 532h1v1h-1zM503 534h1v1h-1zM504 518h1v1h-1zM505 533h1v1h-1zM506 533h1v1h-1zM506 685h1v1h-1zM507 519h1v1h-1zM507 534h1v1h-1zM507 652h1v1h-1zM507 685h1v1h-1zM508 518h1v1h-1zM508 532h1v1h-1zM508 685h1v1h-1zM509 518h1v1h-1zM509 532h1v1h-1zM510 518h1v1h-1zM510 533h1v1h-1zM512 533h1v1h-1zM512 549h1v1h-1zM513 685h1v1h-1zM515 639h1v1h-1zM515 685h1v1h-1zM516 605h1v1h-1zM517 518h1v1h-1zM517 533h1v1h-1zM517 684h1v1h-1zM518 685h1v1h-1zM519 685h1v1h-1zM520 518h1v1h-1zM521 596h1v1h-1zM521 685h1v1h-1zM522 685h1v1h-1zM524 516h1v1h-1zM524 637h1v1h-1zM524 685h1v1h-1zM525 518h1v1h-1zM525 533h1v1h-1zM525 685h1v1h-1zM526 534h1v1h-1zM526 684h1v1h-1zM527 672h1v1h-1zM527 685h1v1h-1zM528 533h1v1h-1zM528 685h1v1h-1zM529 532h1v1h-1zM529 685h1v1h-1zM530 533h1v1h-1zM530 660h1v1h-1zM530 685h1v1h-1zM531 532h1v1h-1zM531 685h1v1h-1zM532 684h1v1h-1zM534 545h1v1h-1zM534 685h1v1h-1zM536 517h1v1h-1zM537 518h1v1h-1zM537 532h1v1h-1zM537 685h1v1h-1zM538 518h1v1h-1zM539 518h1v1h-1zM539 533h1v1h-1zM539 685h1v1h-1zM541 488h1v1h-1zM542 519h1v1h-1zM542 684h1v1h-1zM543 532h1v1h-1zM543 685h1v1h-1zM544 518h1v1h-1zM544 532h1v1h-1zM545 533h1v1h-1zM545 685h1v1h-1zM547 533h1v1h-1zM548 518h1v1h-1zM548 532h1v1h-1zM549 518h1v1h-1zM550 533h1v1h-1zM551 518h1v1h-1zM553 533h1v1h-1zM553 684h1v1h-1zM554 511h1v1h-1zM554 532h1v1h-1zM555 518h1v1h-1zM555 533h1v1h-1zM556 518h1v1h-1zM556 533h1v1h-1zM556 685h1v1h-1zM558 512h1v1h-1zM558 685h1v1h-1zM561 533h1v1h-1zM561 617h1v1h-1zM562 647h1v1h-1zM564 521h1v1h-1zM565 519h1v1h-1zM565 533h1v1h-1zM566 518h1v1h-1zM566 532h1v1h-1zM568 534h1v1h-1zM568 684h1v1h-1zM569 648h1v1h-1zM569 685h1v1h-1zM570 518h1v1h-1zM570 533h1v1h-1zM570 549h1v1h-1zM571 533h1v1h-1zM571 685h1v1h-1zM572 532h1v1h-1zM573 504h1v1h-1zM573 533h1v1h-1zM573 663h1v1h-1zM574 533h1v1h-1zM576 489h1v1h-1zM576 512h1v1h-1zM577 684h1v1h-1zM578 685h1v1h-1zM579 518h1v1h-1zM580 685h1v1h-1zM581 498h1v1h-1zM581 684h1v1h-1zM583 516h1v1h-1zM583 518h1v1h-1zM583 523h1v1h-1zM583 548h1v1h-1zM583 685h1v1h-1zM584 501h1v1h-1zM584 685h1v1h-1zM586 504h1v1h-1zM586 685h1v1h-1zM587 518h1v1h-1zM587 527h1v1h-1zM587 685h1v1h-1zM588 685h1v1h-1zM589 518h1v1h-1zM589 684h1v1h-1zM590 533h1v1h-1zM590 602h1v1h-1zM590 685h1v1h-1zM591 517h1v1h-1zM593 518h1v1h-1zM593 536h1v1h-1zM593 685h1v1h-1zM594 532h1v1h-1zM594 685h1v1h-1zM595 532h1v1h-1zM596 533h1v1h-1zM596 540h1v1h-1zM597 509h1v1h-1zM597 518h1v1h-1zM597 685h1v1h-1zM598 519h1v1h-1zM598 534h1v1h-1zM598 685h1v1h-1zM599 518h1v1h-1zM599 533h1v1h-1zM601 684h1v1h-1zM604 659h1v1h-1zM608 618h1v1h-1zM616 631h1v1h-1zM634 602h1v1h-1zM635 684h1v1h-1zM637 534h1v1h-1zM640 685h1v1h-1zM646 520h1v1h-1zM649 517h1v1h-1zM650 684h1v1h-1zM664 534h1v1h-1zM669 554h1v1h-1zM674 685h1v1h-1zM676 623h1v1h-1zM682 532h1v1h-1zM688 684h1v1h-1zM697 685h1v1h-1zM705 684h1v1h-1zM708 574h1v1h-1zM726 519h1v1h-1zM733 501h1v1h-1zM733 522h1v1h-1zM738 685h1v1h-1zM743 518h1v1h-1zM744 518h1v1h-1zM744 684h1v1h-1zM749 685h1v1h-1zM750 634h1v1h-1zM751 604h1v1h-1zM759 603h1v1h-1zM761 685h1v1h-1zM767 519h1v1h-1zM773 512h1v1h-1zM775 589h1v1h-1zM776 685h1v1h-1zM777 685h1v1h-1zM786 685h1v1h-1zM789 685h1v1h-1zM790 684h1v1h-1zM792 533h1v1h-1zM800 517h1v1h-1zM804 671h1v1h-1zM811 534h1v1h-1zM811 684h1v1h-1zM815 519h1v1h-1zM827 533h1v1h-1z" fill="#ffff00" shape-rendering="crispEdges"/><path d="M46.5 576.0L49.5 590.0L57.5 581.0L57.5 547.0L58.5 547.0L58.5 480.6L59.5 480.6L59.5 418.0L60.5 418.0L60.5 354.0L61.5 354.0L61.5 316.0L61.5 354.0L62.5 354.0L62.5 418.0L63.5 418.0L63.5 480.0L64.5 480.0L64.5 545.0L65.5 545.0L65.5 578.0L65.5 500.0L66.5 500.0L66.5 439.0L67.5 439.0L67.5 330.0L68.5 330.0L68.5 255.0L69.5 255.0L69.5 208.0L70.5 207.0L73.5 207.0L73.5 220.0L74.5 220.0L74.5 243.0L75.5 243.0L75.5 268.0L76.5 268.0L76.5 293.0L77.5 293.0L77.5 350.0L78.5 350.0L78.5 410.6L79.5 410.6L79.5 480.0L80.5 480.0L80.5 550.0L81.5 550.0L81.5 585.0L87.5 585.0L89.5 587.4L89.5 547.0L90.5 547.0L90.5 476.0L91.5 476.0L91.5 404.0L92.5 404.0L92.5 337.0L93.5 337.0L93.5 299.0L93.5 337.0L94.5 337.0L94.5 404.0L95.5 404.0L95.5 476.0L96.5 476.0L96.5 547.0L97.5 547.0L97.5 586.3L101.0 582.0L105.5 581.0L105.5 547.0L106.5 547.0L106.5 476.0L107.5 476.0L107.5 395.0L108.5 395.0L108.5 328.0L109.5 328.0L109.5 290.0L109.5 328.0L110.5 328.0L110.5 395.0L111.5 395.0L111.5 476.0L112.5 476.0L112.5 547.0L113.5 547.0L113.5 579.0L115.5 577.6L120.5 576.0L120.5 547.0L121.5 547.0L121.5 476.0L122.5 476.0L122.5 402.6L123.5 402.6L123.5 335.6L124.5 335.6L124.5 297.6L124.5 335.6L125.5 335.6L125.5 402.6L126.5 402.6L126.5 476.0L127.5 476.0L127.5 547.0L128.5 547.0L128.5 576.0L136.5 581.5L136.5 547.0L137.5 547.0L137.5 476.0L138.5 476.0L138.5 382.0L139.5 382.0L139.5 315.0L140.5 315.0L140.5 277.0L140.5 315.0L141.5 315.0L141.5 382.0L142.5 382.0L142.5 476.0L143.5 476.0L143.5 547.0L144.5 547.0L144.5 580.0L147.0 579.8L152.5 576.0L152.5 547.0L153.5 547.0L153.5 476.0L154.5 476.0L154.5 380.0L155.5 380.0L155.5 313.0L156.5 313.0L156.5 275.0L156.5 313.0L157.5 313.0L157.5 380.0L158.5 380.0L158.5 476.0L159.5 476.0L159.5 547.0L160.5 547.0L160.5 580.4L165.5 580.4L168.5 578.7L168.5 547.0L169.5 547.0L169.5 476.0L170.5 476.0L170.5 380.0L171.5 380.0L171.5 313.0L172.5 313.0L172.5 275.0L172.5 313.0L173.5 313.0L173.5 380.0L174.5 380.0L174.5 476.0L175.5 476.0L175.5 547.0L176.5 547.0L176.5 579.3L184.5 579.3L184.5 547.0L185.5 547.0L185.5 476.0L186.5 476.0L186.5 382.0L187.5 382.0L187.5 315.0L188.5 315.0L188.5 277.0L188.5 315.0L189.5 315.0L189.5 382.0L190.5 382.0L190.5 476.0L191.5 476.0L191.5 547.0L192.5 547.0L192.5 579.3L194.0 577.6L197.5 576.7L199.5 577.8L199.5 547.0L200.5 547.0L200.5 476.0L201.5 476.0L201.5 392.8L202.5 392.8L202.5 325.8L203.5 325.8L203.5 287.8L203.5 325.8L204.5 325.8L204.5 392.8L205.5 392.8L205.5 476.0L206.5 476.0L206.5 547.0L207.5 547.0L207.5 577.8L211.5 579.3L215.5 578.3L215.5 547.0L216.5 547.0L216.5 476.0L217.5 476.0L217.5 389.0L218.5 389.0L218.5 322.0L219.5 322.0L219.5 284.0L219.5 322.0L220.5 322.0L220.5 389.0L221.5 389.0L221.5 476.0L222.5 476.0L222.5 547.0L223.5 547.0L223.5 574.3L225.5 575.6L231.5 578.3L231.5 547.0L232.5 547.0L232.5 476.0L233.5 476.0L233.5 379.0L234.5 379.0L234.5 312.0L235.5 312.0L235.5 274.0L235.5 312.0L236.5 312.0L236.5 379.0L237.5 379.0L237.5 476.0L238.5 476.0L238.5 547.0L239.5 547.0L239.5 575.4L244.0 574.3L247.5 572.8L247.5 547.0L248.5 547.0L248.5 476.0L249.5 476.0L249.5 391.0L250.5 391.0L250.5 324.0L251.5 324.0L251.5 286.0L251.5 324.0L252.5 324.0L252.5 391.0L253.5 391.0L253.5 476.0L254.5 476.0L254.5 547.0L255.5 547.0L255.5 577.0L258.5 579.3L262.5 570.0L262.5 547.0L263.5 547.0L263.5 476.0L264.5 476.0L264.5 382.0L265.5 382.0L265.5 315.0L266.5 315.0L266.5 277.0L266.5 315.0L267.5 315.0L267.5 382.0L268.5 382.0L268.5 476.0L269.5 476.0L269.5 547.0L270.5 547.0L270.5 577.0L275.0 579.3L278.5 579.0L278.5 547.0L279.5 547.0L279.5 476.0L280.5 476.0L280.5 379.7L281.5 379.7L281.5 312.7L282.5 312.7L282.5 274.7L282.5 312.7L283.5 312.7L283.5 379.7L284.5 379.7L284.5 476.0L285.5 476.0L285.5 547.0L286.5 547.0L286.5 575.4L291.5 580.0L294.5 580.4L294.5 547.0L295.5 547.0L295.5 476.0L296.5 476.0L296.5 383.0L297.5 383.0L297.5 316.0L298.5 316.0L298.5 278.0L298.5 316.0L299.5 316.0L299.5 383.0L300.5 383.0L300.5 476.0L301.5 476.0L301.5 547.0L302.5 547.0L302.5 577.8L304.5 576.0L310.5 576.7L310.5 547.0L311.5 547.0L311.5 476.0L312.5 476.0L312.5 384.0L313.5 384.0L313.5 317.0L314.5 317.0L314.5 279.0L314.5 317.0L315.5 317.0L315.5 384.0L316.5 384.0L316.5 476.0L317.5 476.0L317.5 547.0L318.5 547.0L318.5 575.4L320.0 576.0L326.5 576.0L326.5 547.0L327.5 547.0L327.5 476.0L328.5 476.0L328.5 380.8L329.5 380.8L329.5 313.8L330.5 313.8L330.5 275.8L330.5 313.8L331.5 313.8L331.5 380.8L332.5 380.8L332.5 476.0L333.5 476.0L333.5 547.0L334.5 547.0L334.5 577.0L337.5 579.3L341.5 576.0L341.5 547.0L342.5 547.0L342.5 476.0L343.5 476.0L343.5 379.7L344.5 379.7L344.5 312.7L345.5 312.7L345.5 274.7L345.5 312.7L346.5 312.7L346.5 379.7L347.5 379.7L347.5 476.0L348.5 476.0L348.5 547.0L349.5 547.0L349.5 576.0L354.5 576.7L357.5 577.0L357.5 547.0L358.5 547.0L358.5 476.0L359.5 476.0L359.5 395.0L360.5 395.0L360.5 328.0L361.5 328.0L361.5 290.0L361.5 328.0L362.5 328.0L362.5 395.0L363.5 395.0L363.5 476.0L364.5 476.0L364.5 547.0L365.5 547.0L365.5 577.7L369.5 573.6L369.5 563.0L370.5 563.0L370.5 541.0L371.5 541.0L371.5 515.0L372.5 515.0L372.5 495.0L373.5 495.0L373.5 470.0L374.5 470.0L374.5 404.0L375.5 404.0L375.5 340.0L376.5 340.0L376.5 300.0L377.5 300.0L377.5 269.0L377.5 300.0L378.5 300.0L378.5 384.6L379.5 384.6L379.5 470.0L380.5 470.0L380.5 539.0L381.5 539.0L381.5 577.7L381.5 558.0L382.5 558.0L382.5 510.0L383.5 510.0L383.5 480.6L384.5 480.6L384.5 441.7L385.5 441.7L385.5 421.8L385.5 441.7L386.5 441.7L386.5 480.6L387.5 480.6L387.5 510.0L388.5 510.0L388.5 545.0L389.5 545.0L389.5 577.7L389.5 558.0L390.5 558.0L390.5 463.8L391.5 463.8L391.5 389.0L392.5 389.0L392.5 308.0L393.5 308.0L393.5 274.7L393.5 308.0L394.5 308.0L394.5 360.0L395.5 360.0L395.5 415.7L396.5 415.7L396.5 471.4L397.5 471.4L397.5 509.7L398.5 509.7L398.5 529.7L399.5 529.7L399.5 550.6L400.5 550.6L400.5 570.0L401.5 570.0L401.5 581.7L401.5 550.0L402.5 550.0L402.5 395.8L403.5 395.8L403.5 273.0L404.5 273.0L404.5 209.0L408.5 194.0L408.5 242.8L409.5 242.8L409.5 340.0L410.5 340.0L410.5 438.7L411.5 438.7L411.5 536.8L412.5 536.8L412.5 584.8L416.5 587.3L420.5 588.4L420.5 549.0L421.5 549.0L421.5 476.0L422.5 476.0L422.5 378.6L423.5 378.6L423.5 311.6L424.5 311.6L424.5 273.6L424.5 311.6L425.5 311.6L425.5 378.6L426.5 378.6L426.5 476.0L427.5 476.0L427.5 537.9L428.5 537.9L428.5 575.6L432.5 579.5L436.5 576.6L436.5 538.9L437.5 538.9L437.5 476.0L438.5 476.0L438.5 378.6L439.5 378.6L439.5 311.6L440.5 311.6L440.5 273.6L440.5 311.6L441.5 311.6L441.5 378.6L442.5 378.6L442.5 476.0L443.5 476.0L443.5 520.0L444.5 520.0L444.5 558.8L448.5 577.0L451.5 578.7L451.5 538.4L452.5 538.4L452.5 470.0L453.5 470.0L453.5 400.0L454.5 400.0L454.5 330.0L455.5 330.0L455.5 298.7L456.5 298.7L456.5 258.8L456.5 296.8L457.5 296.8L457.5 363.8L458.5 363.8L458.5 476.0L459.5 476.0L459.5 547.0L460.5 547.0L460.5 577.0L461.5 580.4L464.5 580.4L468.5 576.0L468.5 547.0L469.5 547.0L469.5 476.0L470.5 476.0L470.5 380.0L471.5 380.0L471.5 313.0L472.5 313.0L472.5 275.0L472.5 313.0L473.5 313.0L473.5 380.0L474.5 380.0L474.5 500.0L475.5 500.0L475.5 533.0L480.5 548.0L482.5 567.0L483.5 574.0L483.5 547.0L484.5 547.0L484.5 476.0L485.5 476.0L485.5 379.0L486.5 379.0L486.5 312.0L487.5 312.0L487.5 274.0L487.5 312.0L488.5 312.0L488.5 379.0L489.5 379.0L489.5 476.0L490.5 476.0L490.5 547.0L491.5 547.0L491.5 576.0L495.5 578.3L499.5 576.0L499.5 547.0L500.5 547.0L500.5 440.0L501.5 440.0L501.5 358.0L502.5 358.0L502.5 270.0L503.5 270.0L503.5 226.0L507.5 222.3L507.5 248.0L508.5 248.0L508.5 298.5L509.5 298.5L509.5 350.0L510.5 350.0L510.5 400.8L511.5 400.8L511.5 432.8L512.5 432.8L512.5 444.6L513.5 444.6L513.5 456.8L514.5 456.8L514.5 469.0L515.5 469.0L515.5 474.7L515.5 448.0L516.5 448.0L516.5 395.5L517.5 395.5L517.5 344.0L518.5 344.0L518.5 298.0L519.5 298.0L519.5 265.0L519.5 298.0L520.5 298.0L520.5 381.7L521.5 381.7L521.5 476.0L522.5 476.0L522.5 536.8L523.5 536.8L523.5 575.0L525.5 575.5L531.5 580.2L531.5 536.8L532.5 536.8L532.5 450.0L533.5 450.0L533.5 361.7L534.5 361.7L534.5 273.0L535.5 273.0L535.5 230.0L535.5 273.0L536.5 273.0L536.5 357.0L537.5 357.0L537.5 450.0L538.5 450.0L538.5 524.6L539.5 524.6L539.5 569.0L543.5 587.3L546.5 578.0L546.5 540.0L547.5 540.0L547.5 476.0L548.5 476.0L548.5 379.0L549.5 379.0L549.5 312.0L550.5 312.0L550.5 274.0L550.5 312.0L551.5 312.0L551.5 379.0L552.5 379.0L552.5 476.0L553.5 476.0L553.5 538.9L554.5 538.9L554.5 576.0L562.5 576.0L562.5 538.9L563.5 538.9L563.5 476.0L564.5 476.0L564.5 379.0L565.5 379.0L565.5 312.0L566.5 312.0L566.5 274.0L566.5 312.0L567.5 312.0L567.5 379.0L568.5 379.0L568.5 476.0L569.5 476.0L569.5 538.9L570.5 538.9L570.5 576.0L574.5 578.4L574.5 563.9L575.5 563.9L575.5 535.8L576.5 535.8L576.5 500.0L577.5 500.0L577.5 470.0L578.5 470.0L578.5 440.0L579.5 440.0L579.5 400.0L580.5 400.0L580.5 360.0L581.5 360.0L581.5 326.0L582.5 326.0L582.5 305.0L582.5 326.0L583.5 326.0L583.5 420.0L584.5 420.0L584.5 480.0L585.5 480.0L585.5 543.0L586.5 543.0L586.5 576.0L593.5 576.0L594.5 577.7L594.5 500.0L595.5 500.0L595.5 400.0L596.5 400.0L596.5 330.0L597.5 330.0L597.5 262.0L598.5 262.0L598.5 216.0L599.5 212.2L602.0 210.4L610.7 210.4L614.4 202.7L617.6 210.2L624.8 210.2L629.2 201.6L633.6 210.2L641.2 210.2L645.2 203.8L648.9 211.0L657.6 211.0L661.3 202.7L665.2 210.6L673.5 210.6L677.0 202.7L681.8 211.7L688.4 211.7L692.8 202.7L697.1 210.6L704.8 208.4L708.7 199.0L713.0 208.9L714.0 207.8L720.5 207.8L721.5 215.2L721.5 223.0L722.5 223.0L722.5 237.0L723.5 237.0L723.5 252.0L724.5 252.0L724.5 303.5L725.5 303.5L725.5 420.0L726.5 420.0L726.5 460.0L727.5 460.0L727.5 537.5L728.5 537.5L728.5 576.3L731.5 577.3L736.5 580.0L736.5 542.0L737.5 542.0L737.5 476.0L738.5 476.0L738.5 387.0L739.5 387.0L739.5 309.6L740.5 309.6L740.5 270.8L740.5 309.6L741.5 309.6L741.5 385.0L742.5 385.0L742.5 462.0L743.5 462.0L743.5 537.5L744.5 537.5L744.5 576.8L748.5 580.0L752.5 576.8L752.5 537.5L753.5 537.5L753.5 460.0L754.5 460.0L754.5 382.0L755.5 382.0L755.5 303.5L756.5 303.5L756.5 265.0L756.5 303.5L757.5 303.5L757.5 398.0L758.5 398.0L758.5 486.0L759.5 486.0L759.5 531.0L759.5 504.0L760.5 504.0L760.5 452.0L761.5 452.0L761.5 400.0L762.5 400.0L762.5 340.8L763.5 340.8L763.5 318.8L763.5 340.8L764.5 340.8L764.5 384.0L765.5 384.0L765.5 426.0L766.5 426.0L766.5 470.0L767.5 470.0L767.5 490.5L767.5 455.0L768.5 455.0L768.5 382.0L769.5 382.0L769.5 309.7L770.5 309.7L770.5 238.0L771.5 238.0L771.5 200.2L775.0 208.4L783.4 208.4L787.3 200.6L791.7 208.9L799.7 208.9L803.4 200.6L808.0 208.4L815.5 208.4L819.4 200.6L823.0 204.7L827.0 208.4L831.5 208.4" fill="none" stroke="#0cb6fa" stroke-width="1" shape-rendering="crispEdges" stroke-linejoin="miter"/><text x="40.6" y="174.6" font-family="Liberation Sans, sans-serif" font-size="11" fill="#000" text-anchor="end" textLength="23.0" lengthAdjust="spacingAndGlyphs">1500</text><text x="40.6" y="263.6" font-family="Liberation Sans, sans-serif" font-size="11" fill="#000" text-anchor="end" textLength="23.0" lengthAdjust="spacingAndGlyphs">1250</text><text x="40.6" y="353.6" font-family="Liberation Sans, sans-serif" font-size="11" fill="#000" text-anchor="end" textLength="23.0" lengthAdjust="spacingAndGlyphs">1000</text><text x="40.6" y="443.6" font-family="Liberation Sans, sans-serif" font-size="11" fill="#000" text-anchor="end" textLength="17.25" lengthAdjust="spacingAndGlyphs">750</text><text x="40.6" y="532.6" font-family="Liberation Sans, sans-serif" font-size="11" fill="#000" text-anchor="end" textLength="17.25" lengthAdjust="spacingAndGlyphs">500</text><text x="40.6" y="622.6" font-family="Liberation Sans, sans-serif" font-size="11" fill="#000" text-anchor="end" textLength="17.25" lengthAdjust="spacingAndGlyphs">250</text><text x="836" y="174.6" font-family="Liberation Sans, sans-serif" font-size="11" fill="#000" text-anchor="start" textLength="20.8" lengthAdjust="spacingAndGlyphs">0.60</text><text x="836" y="263.6" font-family="Liberation Sans, sans-serif" font-size="11" fill="#000" text-anchor="start" textLength="20.8" lengthAdjust="spacingAndGlyphs">0.50</text><text x="836" y="353.6" font-family="Liberation Sans, sans-serif" font-size="11" fill="#000" text-anchor="start" textLength="20.8" lengthAdjust="spacingAndGlyphs">0.40</text><text x="836" y="443.6" font-family="Liberation Sans, sans-serif" font-size="11" fill="#000" text-anchor="start" textLength="20.8" lengthAdjust="spacingAndGlyphs">0.30</text><text x="836" y="532.6" font-family="Liberation Sans, sans-serif" font-size="11" fill="#000" text-anchor="start" textLength="20.8" lengthAdjust="spacingAndGlyphs">0.20</text><text x="836" y="622.6" font-family="Liberation Sans, sans-serif" font-size="11" fill="#000" text-anchor="start" textLength="20.8" lengthAdjust="spacingAndGlyphs">0.10</text><text x="45.6" y="167.8" font-family="Liberation Sans, sans-serif" font-size="11" fill="#000" text-anchor="start" textLength="24" lengthAdjust="spacingAndGlyphs">MB/s</text><text x="831" y="167.8" font-family="Liberation Sans, sans-serif" font-size="11" fill="#000" text-anchor="end" textLength="13.6" lengthAdjust="spacingAndGlyphs">ms</text><text x="48.6" y="182" font-family="Liberation Sans, sans-serif" font-size="11" fill="#a0a0a0" text-anchor="start" textLength="56.4" lengthAdjust="spacingAndGlyphs">trial version</text></svg><div style="position:absolute;left:874px;top:152px;width:73px;height:21px;box-sizing:border-box;border:1px solid #0078d7;background:#e5f1fb;"></div><span class="t" id="start" style="left:899px;top:156.47px;font-size:11.5px;line-height:15.5px;letter-spacing:-0.051px;transform:scaleX(0.8800);transform-origin:0 0;">Start</span><div class="sep" style="top:183px"></div><svg style="left:869px;top:188px" width="15" height="32" viewBox="0 0 15 32"><circle cx="7.5" cy="7.5" r="6" fill="#fff" stroke="#333" stroke-width="1"/><circle cx="7.5" cy="7.5" r="3.2" fill="#333"/><circle cx="7.5" cy="23.5" r="6" fill="#fff" stroke="#333" stroke-width="1"/></svg><span class="t" id="read" style="left:886px;top:188.37px;font-size:11.5px;line-height:15.5px;letter-spacing:0.000px;transform:scaleX(0.9018);transform-origin:0 0;">Read</span><span class="t" id="write" style="left:886px;top:204.47px;font-size:11.5px;line-height:15.5px;letter-spacing:0.000px;transform:scaleX(0.9014);transform-origin:0 0;">Write</span><div class="sep" style="top:222px"></div><div class="chk" style="top:230px"></div><span class="t" id="ss" style="left:886px;top:229.47px;font-size:11.5px;line-height:15.5px;letter-spacing:0.000px;transform:scaleX(0.9032);transform-origin:0 0;">Short stroke</span><div style="position:absolute;left:870px;top:250px;width:62px;height:20px;box-sizing:border-box;border:1px solid #c4c4c4;background:#fff;"></div><div style="position:absolute;left:914px;top:251px;width:17px;height:18px;background:#f0f0f0;border-left:1px solid #d0d0d0;box-sizing:border-box;"></div><svg style="left:914px;top:251px" width="17" height="18" viewBox="0 0 17 18"><rect x="1.5" y="0.5" width="15" height="8" fill="#e8e8e8" stroke="#d4d4d4"/><rect x="1.5" y="9.5" width="15" height="8" fill="#e8e8e8" stroke="#d4d4d4"/><path d="M6 6L9 3L12 6z" fill="#707070"/><path d="M6 12L9 15L12 12z" fill="#707070"/></svg><span class="t" id="n40" style="left:873px;top:252.47px;font-size:11.5px;line-height:15.5px;letter-spacing:0.000px;transform:scaleX(0.9377);transform-origin:0 0;color:#8a8a8a;">40</span><span class="t" id="gb" style="left:942.5px;top:252.47px;font-size:11.5px;line-height:15.5px;letter-spacing:0.000px;transform:scaleX(0.9021);transform-origin:0 0;">gB</span><div class="chk" style="top:279px"></div><span class="t" id="tr" style="left:886px;top:278.67px;font-size:11.5px;line-height:15.5px;letter-spacing:0.000px;transform:scaleX(0.9021);transform-origin:0 0;">Transfer rate</span><div class="sep" style="top:294px"></div><span class="t" id="min" style="left:870.4px;top:296.67px;font-size:11.5px;line-height:15.5px;letter-spacing:-0.198px;transform:scaleX(0.8800);transform-origin:0 0;">Minimum</span><div class="val" style="top:312px"></div><span class="t" id="v1" style="left:883.3px;top:311.64px;font-size:12px;line-height:16px;letter-spacing:0.000px;transform:scaleX(1.0540);transform-origin:0 0;font-weight:bold;color:#1eb4ff;">330.3 MB/s</span><span class="t" id="max" style="left:870.4px;top:329.57px;font-size:11.5px;line-height:15.5px;letter-spacing:-0.201px;transform:scaleX(0.8800);transform-origin:0 0;">Maximum</span><div class="val" style="top:344px"></div><span class="t" id="v2" style="left:881px;top:343.34px;font-size:12px;line-height:16px;letter-spacing:0.000px;transform:scaleX(1.0448);transform-origin:0 0;font-weight:bold;color:#1eb4ff;">1434.0 MB/s</span><span class="t" id="avg" style="left:870.4px;top:359.37px;font-size:11.5px;line-height:15.5px;letter-spacing:0.000px;transform:scaleX(0.9052);transform-origin:0 0;">Average</span><div class="val" style="top:375px"></div><span class="t" id="v3" style="left:883.3px;top:374.24px;font-size:12px;line-height:16px;letter-spacing:0.000px;transform:scaleX(1.0540);transform-origin:0 0;font-weight:bold;color:#1eb4ff;">804.5 MB/s</span><div class="sep" style="top:398px"></div><div class="chk" style="top:404px"></div><span class="t" id="at" style="left:886px;top:403.27px;font-size:11.5px;line-height:15.5px;letter-spacing:0.000px;transform:scaleX(0.9032);transform-origin:0 0;">Access time</span><div class="val" style="top:419px"></div><span class="t" id="v4" style="left:891.7px;top:418.44px;font-size:12px;line-height:16px;letter-spacing:0.000px;transform:scaleX(0.9917);transform-origin:0 0;font-weight:bold;color:#ffff00;">0.145 ms</span><div class="chk" style="top:438px"></div><span class="t" id="br" style="left:886px;top:437.27px;font-size:11.5px;line-height:15.5px;letter-spacing:0.000px;transform:scaleX(0.8885);transform-origin:0 0;">Burst rate</span><div class="val" style="top:453px"></div><span class="t" id="v5" style="left:883.3px;top:452.24px;font-size:12px;line-height:16px;letter-spacing:0.000px;transform:scaleX(1.0540);transform-origin:0 0;font-weight:bold;color:#fff;">697.2 MB/s</span><span class="t" id="cpu" style="left:869.8px;top:470.47px;font-size:11.5px;line-height:15.5px;letter-spacing:0.000px;transform:scaleX(0.9097);transform-origin:0 0;">CPU usage</span><div class="val" style="top:486px"></div><span class="t" id="v6" style="left:903px;top:485.44px;font-size:12px;line-height:16px;letter-spacing:0.000px;transform:scaleX(1.0088);transform-origin:0 0;font-weight:bold;color:#fff;">2.5%</span><span class="t" id="nop" style="left:870.4px;top:514.17px;font-size:11.5px;line-height:15.5px;letter-spacing:0.000px;transform:scaleX(0.9001);transform-origin:0 0;">Number of passes</span><div style="position:absolute;left:870px;top:529px;width:78px;height:20px;box-sizing:border-box;border:1px solid #7a7a7a;background:#fff;"></div><svg style="left:930px;top:530px" width="17" height="18" viewBox="0 0 17 18"><rect x="0" y="0" width="17" height="18" fill="#f0f0f0"/><rect x="1.5" y="0.5" width="15" height="8" fill="#e6e6e6" stroke="#c8c8c8"/><rect x="1.5" y="9.5" width="15" height="8" fill="#e6e6e6" stroke="#c8c8c8"/><path d="M5.5 6.5L9 3L12.5 6.5z" fill="#111"/><path d="M5.5 11.5L9 15L12.5 11.5z" fill="#111"/></svg><span class="t" id="one" style="left:873.5px;top:531.37px;font-size:11.5px;line-height:15.5px;letter-spacing:0.000px;">1</span><div style="position:absolute;left:870px;top:557px;width:54px;height:13px;box-sizing:border-box;border:1px solid #bcbcbc;background:#06b025;"></div><span class="t" id="p11" style="left:929px;top:556.57px;font-size:11.5px;line-height:15.5px;letter-spacing:0.000px;transform:scaleX(0.9062);transform-origin:0 0;">1/1</span><svg style="left:870px;top:279px" width="13" height="13" viewBox="0 0 13 13"><path d="M2.6 6.4L5.2 9.2L10.4 3.2" fill="none" stroke="#2b2b2b" stroke-width="1.05"/></svg><svg style="left:870px;top:404px" width="13" height="13" viewBox="0 0 13 13"><path d="M2.6 6.4L5.2 9.2L10.4 3.2" fill="none" stroke="#2b2b2b" stroke-width="1.05"/></svg><svg style="left:870px;top:438px" width="13" height="13" viewBox="0 0 13 13"><path d="M2.6 6.4L5.2 9.2L10.4 3.2" fill="none" stroke="#2b2b2b" stroke-width="1.05"/></svg></body></html>
